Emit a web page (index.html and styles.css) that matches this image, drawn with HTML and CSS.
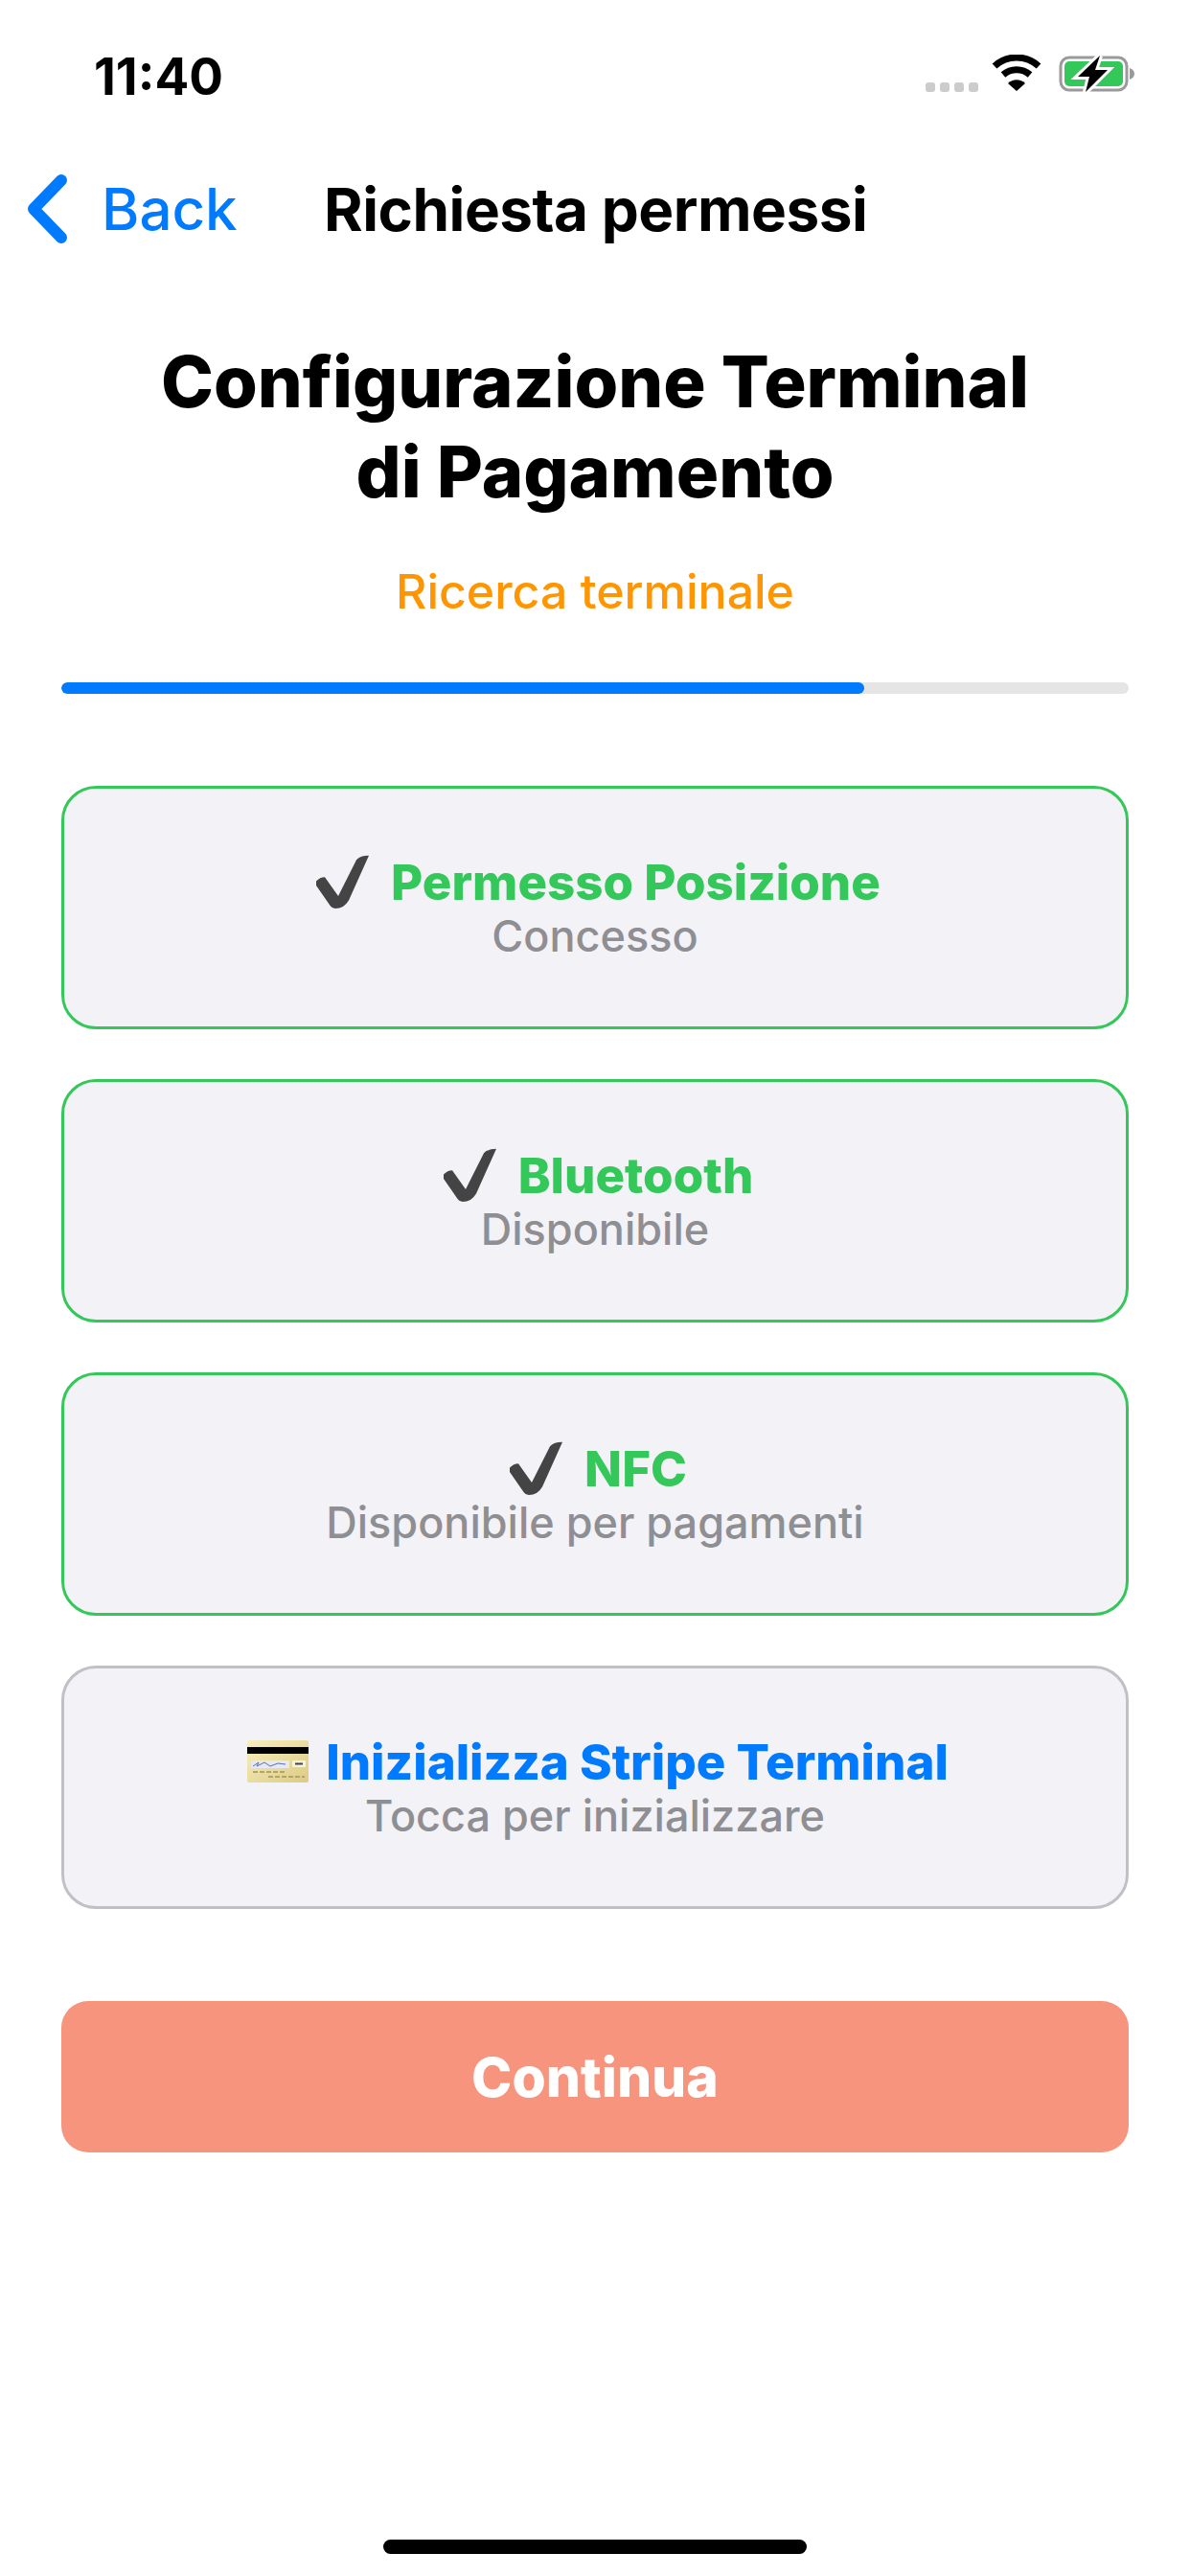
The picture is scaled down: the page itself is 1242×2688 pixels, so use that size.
FILE: index.html
```html
<!DOCTYPE html>
<html lang="it">
<head>
<meta charset="UTF-8">
<meta name="viewport" content="width=device-width, initial-scale=1.0">
<title>Richiesta permessi</title>
<link rel="stylesheet" href="styles.css">
</head>
<body>
<div class="screen">
  <div class="status-bar">
    <span class="time">11:40</span>
    <div class="status-icons">
      <div class="signal"><i></i><i></i><i></i><i></i></div>
      <svg class="wifi" width="52" height="38" viewBox="0 0 52 38">
        <path d="M3 12 C16 0 36 0 49 12" fill="none" stroke="#000" stroke-width="7"/>
        <path d="M12 21 C20 14 32 14 40 21" fill="none" stroke="#000" stroke-width="7"/>
        <path d="M17 30 C22 25 30 25 35 30 L26 38 Z" fill="#000"/>
      </svg>
      <svg class="battery" width="80" height="40" viewBox="0 0 80 40">
        <rect x="2" y="3" width="69" height="34" rx="9" fill="none" stroke="#9a9a9a" stroke-width="3"/>
        <rect x="6" y="7" width="61" height="26" rx="5" fill="#34c759"/>
        <path d="M74 14 C77 15 79 17 79 20 C79 23 77 25 74 26 Z" fill="#9a9a9a"/>
        <path d="M43 1 L20 23 L32 23 L28 39 L51 16 L38 16 Z" fill="#000" stroke="#fff" stroke-width="6" paint-order="stroke"/>
      </svg>
    </div>
  </div>

  <div class="nav-bar">
    <div class="back">
      <svg width="46" height="72" viewBox="0 0 46 72">
        <path d="M37 6 L8 36 L37 66" fill="none" stroke="#007aff" stroke-width="12" stroke-linecap="round" stroke-linejoin="round"/>
      </svg>
      <span>Back</span>
    </div>
    <span class="nav-title">Richiesta permessi</span>
  </div>

  <div class="content">
    <h1>Configurazione Terminal<br>di Pagamento</h1>
    <p class="status-text">Ricerca terminale</p>
    <div class="progress"><div class="progress-fill"></div></div>

    <div class="cards">
      <div class="card done">
        <div class="card-title">
          <svg class="check" width="57" height="56" viewBox="0 0 57 65" preserveAspectRatio="none"><path d="M1 32 Q5 27 10 27 L24 50 L43 6 Q47 1 56 1 L35 55 Q30 65 21 65 Q17 65 14 59 L1 37 Z" fill="#444"/></svg>
          <span>Permesso Posizione</span>
        </div>
        <div class="card-sub">Concesso</div>
      </div>
      <div class="card done">
        <div class="card-title">
          <svg class="check" width="57" height="56" viewBox="0 0 57 65" preserveAspectRatio="none"><path d="M1 32 Q5 27 10 27 L24 50 L43 6 Q47 1 56 1 L35 55 Q30 65 21 65 Q17 65 14 59 L1 37 Z" fill="#444"/></svg>
          <span>Bluetooth</span>
        </div>
        <div class="card-sub">Disponibile</div>
      </div>
      <div class="card done">
        <div class="card-title">
          <svg class="check" width="57" height="56" viewBox="0 0 57 65" preserveAspectRatio="none"><path d="M1 32 Q5 27 10 27 L24 50 L43 6 Q47 1 56 1 L35 55 Q30 65 21 65 Q17 65 14 59 L1 37 Z" fill="#444"/></svg>
          <span>NFC</span>
        </div>
        <div class="card-sub">Disponibile per pagamenti</div>
      </div>
      <div class="card todo">
        <div class="card-title">
          <svg class="credit-card" width="64" height="44" viewBox="0 0 64 44">
            <defs>
              <linearGradient id="cardGold" x1="0" y1="0" x2="1" y2="1">
                <stop offset="0" stop-color="#f8efbd"/>
                <stop offset="1" stop-color="#dccb84"/>
              </linearGradient>
            </defs>
            <rect x="0" y="0" width="64" height="44" rx="2" fill="url(#cardGold)"/>
            <rect x="0" y="7" width="64" height="7" fill="#000"/>
            <rect x="4" y="21" width="40" height="8" fill="#e6e8f2"/>
            <path d="M6 27 L12 23 L10 27 L18 23 L24 27 L32 24 L40 25" fill="none" stroke="#5a6fb5" stroke-width="1"/>
            <rect x="47" y="21" width="14" height="7" fill="#f4f1dc"/>
            <path d="M50 24.500 H58" stroke="#444" stroke-width="2"/>
            <path d="M6 33 H40 M22 38 H60" stroke="#b3a468" stroke-width="2" stroke-dasharray="5 2"/>
          </svg>
          <span class="title-blue">Inizializza Stripe Terminal</span>
        </div>
        <div class="card-sub">Tocca per inizializzare</div>
      </div>
    </div>

    <button class="continue">Continua</button>
  </div>

  <div class="home-indicator"></div>
</div>
</body>
</html>
```

FILE: styles.css
```css
* {
  box-sizing: border-box;
}
body {
  margin: 0;
  background: #fff;
  font-family: Inter, "Liberation Sans", sans-serif;
  color: #000;
}
.screen {
  width: 1242px;
  height: 2688px;
  display: flex;
  flex-direction: column;
  overflow: hidden;
}
.status-bar {
  height: 180px;
  padding: 52px 57px 0 98px;
  display: flex;
  justify-content: space-between;
  align-items: flex-start;
}
.time {
  font-size: 53px;
  font-weight: 700;
  line-height: 56px;
}
.status-icons {
  display: flex;
  align-items: flex-start;
  padding-top: 5px;
}
.signal {
  display: flex;
  gap: 5px;
  margin-top: 29px;
  margin-right: 14px;
}
.signal i {
  width: 10px;
  height: 10px;
  border-radius: 3px;
  background: #ccc;
}
.wifi {
  margin-right: 18px;
}
.nav-bar {
  height: 76px;
  display: flex;
  align-items: center;
  padding-left: 27px;
}
.back {
  display: flex;
  align-items: center;
  width: 311px;
  color: #007aff;
  font-size: 60px;
  font-weight: 500;
}
.back span {
  margin-left: 33px;
}
.nav-title {
  font-size: 62px;
  font-weight: 700;
  letter-spacing: -0.5px;
}
.content {
  padding: 0 64px;
}
h1 {
  margin: 95px 0 0;
  font-size: 74px;
  line-height: 94px;
  font-weight: 800;
  text-align: center;
}
.status-text {
  margin: 48px 0 0;
  font-size: 50px;
  line-height: 60px;
  font-weight: 500;
  color: #ff9500;
  text-align: center;
}
.progress {
  height: 12px;
  margin-top: 65px;
  background: #e5e5e5;
  border-radius: 6px;
  overflow: hidden;
}
.progress-fill {
  width: 75.200%;
  height: 100%;
  background: #007aff;
  border-radius: 6px;
}
.cards {
  margin-top: 96px;
  display: flex;
  flex-direction: column;
  gap: 52px;
}
.card {
  height: 254px;
  padding-top: 62px;
  background: #f2f2f7;
  border: 3px solid #34c759;
  border-radius: 36px;
  text-align: center;
}
.card.todo {
  border-color: #c0c0c6;
}
.card-title {
  display: flex;
  align-items: center;
  justify-content: center;
  height: 70px;
  gap: 22px;
  padding-left: 6px;
  font-size: 51px;
  font-weight: 800;
  color: #34c759;
}
.credit-card {
  margin-right: -4px;
}
.card-title .title-blue {
  color: #007aff;
}
.card-sub {
  margin-top: -3px;
  font-size: 45px;
  line-height: 50px;
  font-weight: 500;
  color: #8e8e93;
}
.continue {
  display: block;
  width: 100%;
  height: 158px;
  margin-top: 96px;
  border: none;
  border-radius: 28px;
  background: #f7947e;
  color: #fff;
  font-family: inherit;
  font-size: 57px;
  font-weight: 800;
}
.home-indicator {
  width: 442px;
  height: 15px;
  margin: auto auto 23px;
  border-radius: 8px;
  background: #000;
}
```
